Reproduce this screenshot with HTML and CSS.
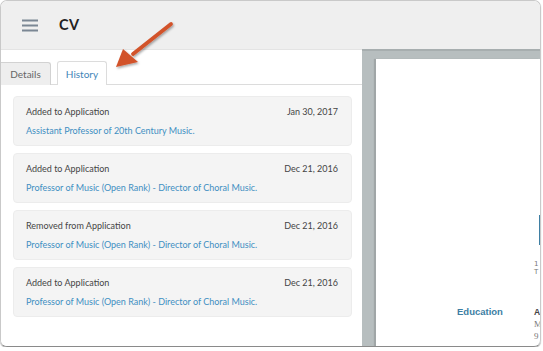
FILE: index.html
```html
<!DOCTYPE html>
<html>
<head>
<meta charset="utf-8">
<link rel="stylesheet" href="styles.css">
</head>
<body>
<div class="window">
  <header class="header">
    <svg class="menu" width="16" height="13" viewBox="0 0 16 13"><rect x="0" y="0.5" width="16" height="2" fill="#7b8794"/><rect x="0" y="5.5" width="16" height="2" fill="#7b8794"/><rect x="0" y="10.5" width="16" height="2" fill="#7b8794"/></svg>
    <span class="title">CV</span>
  </header>
  <div class="main">
    <section class="left">
      <nav class="tabs">
        <span class="tab">Details</span>
        <span class="tab active">History</span>
      </nav>
      <div class="list">
        <div class="card">
          <div class="row"><span>Added to Application</span><span>Jan 30, 2017</span></div>
          <a class="link">Assistant Professor of 20th Century Music.</a>
        </div>
        <div class="card">
          <div class="row"><span>Added to Application</span><span>Dec 21, 2016</span></div>
          <a class="link">Professor of Music (Open Rank) - Director of Choral Music.</a>
        </div>
        <div class="card">
          <div class="row"><span>Removed from Application</span><span>Dec 21, 2016</span></div>
          <a class="link">Professor of Music (Open Rank) - Director of Choral Music.</a>
        </div>
        <div class="card">
          <div class="row"><span>Added to Application</span><span>Dec 21, 2016</span></div>
          <a class="link">Professor of Music (Open Rank) - Director of Choral Music.</a>
        </div>
      </div>
    </section>
    <section class="right">
      <div class="page">
        <div class="bar"></div>
        <div class="addr"><span>1</span><span>T</span></div>
        <div class="edu">
          <span class="edu-label">Education</span>
          <div class="edu-text"><span class="a">A</span><span class="s">M</span><span class="s">9</span></div>
        </div>
      </div>
    </section>
  </div>
  <svg class="arrow" width="80" height="60" viewBox="0 0 80 60">
    <defs><filter id="sh" x="-30%" y="-30%" width="160%" height="160%"><feDropShadow dx="1" dy="1.5" stdDeviation="1.2" flood-color="#000" flood-opacity="0.35"/></filter></defs>
    <g filter="url(#sh)">
      <line x1="65" y1="7" x2="27" y2="37" stroke="#d2532b" stroke-width="3.8" stroke-linecap="round"/>
      <polygon points="10,50 17,32 32,45" fill="#d2532b"/>
    </g>
  </svg>
</div>
</body>
</html>
```
FILE: styles.css
```css
* { box-sizing: border-box; }
body {
  margin: 0;
  background: #fff;
  font-family: Lato, "Open Sans", sans-serif;
}
.window {
  position: relative;
  width: 541px;
  height: 347px;
  border: 1px solid #c9c9c9;
  border-bottom-color: #8a8a8a;
  border-radius: 7px;
  overflow: hidden;
  box-shadow: 0 1px 1px rgba(0,0,0,0.35);
  display: flex;
  flex-direction: column;
}
.header {
  height: 48px;
  flex: none;
  background: #efefef;
  display: flex;
  align-items: center;
  padding-left: 21px;
  gap: 21px;
}
.title {
  font-size: 14.5px;
  font-weight: 700;
  color: #222;
  letter-spacing: 0.4px;
  margin-bottom: 2px;
}
.main {
  flex: 1;
  display: flex;
  min-height: 0;
}
.left {
  width: 361px;
  flex: none;
  background: #fff;
  border-top: 1px solid #e4e4e4;
}
.tabs {
  display: flex;
  gap: 6px;
  border-bottom: 1px solid #dcdcdc;
  height: 35px;
  align-items: flex-end;
}
.tab {
  height: 23px;
  width: 50px;
  display: flex;
  align-items: center;
  justify-content: center;
  font-size: 10px;
  color: #666;
  background: #eeeeee;
  border: 1px solid #d2d2d2;
  border-bottom: none;
  border-radius: 3px 3px 0 0;
  margin-bottom: -1px;
}
.tab:first-child { border-left: none; border-radius: 0 3px 0 0; width: 50px; }
.tab.active {
  background: #fff;
  color: #3f86b8;
  border-color: #dcdcdc;
  height: 24px;
}
.list {
  display: flex;
  flex-direction: column;
  gap: 7px;
  padding: 11px 10px 0 12px;
}
.card {
  height: 50px;
  background: #f4f4f4;
  border: 1px solid #ececec;
  border-radius: 4px;
  padding: 9px 13px 0 12px;
  display: flex;
  flex-direction: column;
  gap: 7px;
}
.row {
  display: flex;
  justify-content: space-between;
  font-size: 9px;
  color: #444;
  line-height: 12px;
}
.link {
  font-size: 9px;
  color: #3f8fc2;
  line-height: 12px;
}
.right {
  flex: 1;
  min-width: 0;
  background: #b7bebf;
  padding: 8px 0 0 14px;
  display: flex;
  border-top: 2px solid #a7aeaf;
}
.page {
  flex: 1;
  min-width: 0;
  overflow: hidden;
  background: #fff;
  box-shadow: -2px 0 1px rgba(0,0,0,0.12);
  display: grid;
  grid-template-columns: 158px 1fr;
  grid-template-rows: 156px 30px 15px auto 25px auto;
}
.bar {
  grid-column: 2;
  grid-row: 2;
  justify-self: end;
  width: 3px;
  height: 30px;
  background: #3f7fa3;
}
.addr {
  grid-column: 2;
  grid-row: 4;
  display: flex;
  flex-direction: column;
  font-family: "DejaVu Sans", sans-serif;
  font-size: 7px;
  color: #777;
  line-height: 8px;
}
.edu { display: contents; }
.edu-label {
  grid-column: 1;
  grid-row: 6;
  font-family: "Liberation Sans", sans-serif;
  font-weight: 700;
  font-size: 9.5px;
  color: #3c7ea3;
  padding-left: 81px;
  line-height: 12px;
  white-space: nowrap;
}
.edu-text {
  grid-column: 2;
  grid-row: 6;
  display: flex;
  flex-direction: column;
  font-size: 9px;
  line-height: 12px;
}
.edu-text .a { font-family: "Liberation Sans", sans-serif; font-weight: 700; color: #444; font-size: 8.5px; }
.edu-text .s { font-family: "Liberation Serif", serif; color: #777; }
.arrow {
  position: absolute;
  left: 105px;
  top: 16px;
}
```
